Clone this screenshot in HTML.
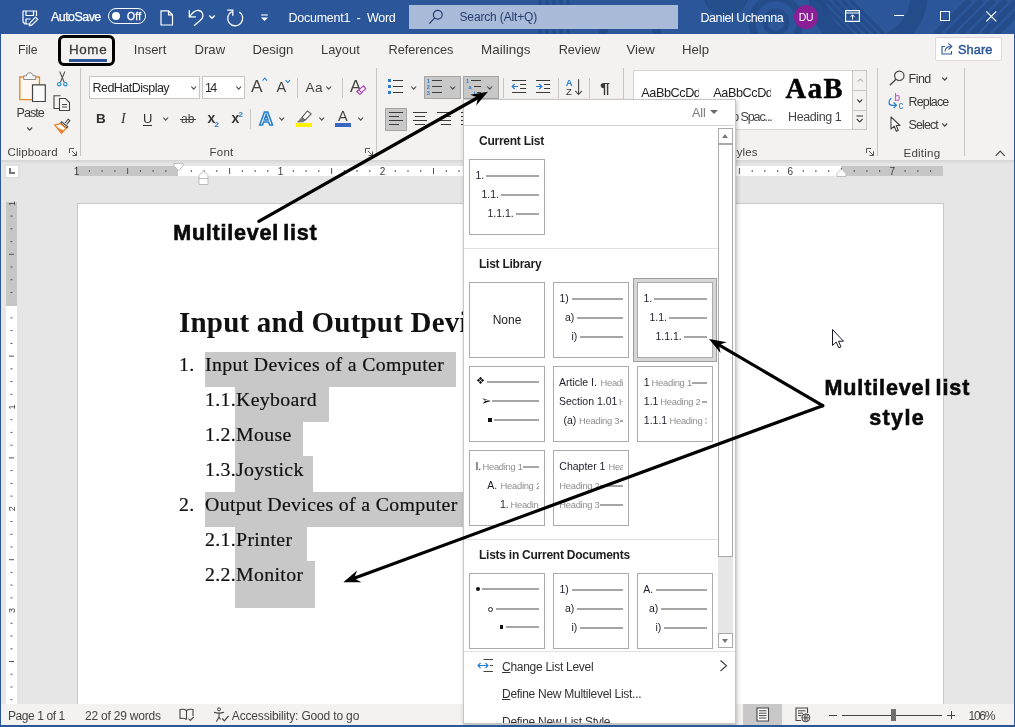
<!DOCTYPE html>
<html lang="en">
<head>
<meta charset="utf-8">
<title>Document1 - Word</title>
<style>
*{box-sizing:border-box;margin:0;padding:0}
html,body{width:1015px;height:727px;overflow:hidden;background:#e6e6e6}
body{font-family:"Liberation Sans",sans-serif;font-size:12px;color:#262626;position:relative}
#root{position:absolute;left:0;top:0;width:1015px;height:727px;overflow:hidden;will-change:transform;opacity:0.999}
.a{position:absolute;white-space:nowrap}
svg{position:absolute;overflow:visible}
#title{left:0;top:0;width:1015px;height:34px;background:#2b579a;color:#fff;font-size:13px}
#title .t{top:10px;line-height:15px}
#tabs{left:0;top:34px;width:1015px;height:32px;background:#f3f2f1;font-size:14px;color:#323130}
#tabs .t{top:7px;line-height:17px}
#ribbon{left:0;top:66px;width:1015px;height:94px;background:#f3f2f1}
#ribbon .lbl{top:79px;font-size:12.5px;line-height:14px;color:#444}
.vsep{width:1px;background:#c8c6c4}
#docbg{left:0;top:160px;width:1015px;height:544px;background:#e6e6e6}
#page{left:77px;top:203px;width:867px;height:502px;background:#fff;border:1px solid #c8c8c8}
.doc{font-family:"Liberation Serif",serif;color:#111}
.hl{background:#c8c8c8}
.li{font-size:19.8px;line-height:24px;letter-spacing:0.35px;-webkit-text-stroke:0.2px #111}
#status{left:0;top:704px;width:1015px;height:23px;background:#f3f2f1;font-size:12.5px;color:#444}
#status .t{top:4px;line-height:15px}
#pop{left:463px;top:99px;width:273px;height:625px;background:#fff;border:1px solid #c6c6c6;box-shadow:1px 2px 4px rgba(0,0,0,.25)}
.sec{font-weight:bold;font-size:12px;letter-spacing:-0.25px;color:#1e1e1e;line-height:15px}
.tile{background:#fff;border:1px solid #ababab;width:76px;height:76px}
.n{font-size:10.5px;color:#1c1c2a;line-height:12px}
.g{font-size:9.4px;color:#8f8f8f;line-height:13px;letter-spacing:-0.28px}
.ln{height:2px;background:#a6a6a6}
.mi{font-size:12px;letter-spacing:-0.28px;color:#333;line-height:16px}
.ann{font-weight:bold;color:#0a0a0a;-webkit-text-stroke:0.6px #0a0a0a}
</style>
</head>
<body>
<div id="root">
<div id="docbg" class="a"></div>
<div class="a" style="left:0;top:160px;width:1015px;height:4px;background:linear-gradient(#d4d4d4,#e6e6e6)"></div>
<div class="a" style="left:4px;top:164px;width:16px;height:15px;background:#fff;border:2px solid #e0e0e0"></div>
<div class="a" style="left:9px;top:168px;width:6px;height:6px;border-left:2px solid #777;border-bottom:2px solid #777"></div>
<div class="a" style="left:76px;top:166px;width:102px;height:10px;background:#c6c6c6"></div>
<div class="a" style="left:178px;top:166px;width:663px;height:10px;background:#fff"></div>
<div class="a" style="left:841px;top:166px;width:102px;height:10px;background:#c6c6c6"></div>
<svg style="left:0;top:160px" width="1015" height="30" font-family="Liberation Sans, sans-serif" font-size="10" fill="#3c3c3c"><text x="76.6" y="14.6" text-anchor="middle">1</text><rect x="88.9" y="10" width="1" height="2" fill="#555"/><rect x="101.6" y="10" width="1" height="2" fill="#555"/><rect x="114.4" y="10" width="1" height="2" fill="#555"/><rect x="127.1" y="8" width="1" height="6" fill="#555"/><rect x="139.9" y="10" width="1" height="2" fill="#555"/><rect x="152.6" y="10" width="1" height="2" fill="#555"/><rect x="165.4" y="10" width="1" height="2" fill="#555"/><rect x="190.8" y="10" width="1" height="2" fill="#555"/><rect x="203.6" y="10" width="1" height="2" fill="#555"/><rect x="216.3" y="10" width="1" height="2" fill="#555"/><rect x="229.1" y="8" width="1" height="6" fill="#555"/><rect x="241.8" y="10" width="1" height="2" fill="#555"/><rect x="254.6" y="10" width="1" height="2" fill="#555"/><rect x="267.3" y="10" width="1" height="2" fill="#555"/><text x="280.6" y="14.6" text-anchor="middle">1</text><rect x="292.8" y="10" width="1" height="2" fill="#555"/><rect x="305.6" y="10" width="1" height="2" fill="#555"/><rect x="318.3" y="10" width="1" height="2" fill="#555"/><rect x="331.1" y="8" width="1" height="6" fill="#555"/><rect x="343.8" y="10" width="1" height="2" fill="#555"/><rect x="356.5" y="10" width="1" height="2" fill="#555"/><rect x="369.3" y="10" width="1" height="2" fill="#555"/><text x="382.5" y="14.6" text-anchor="middle">2</text><rect x="394.8" y="10" width="1" height="2" fill="#555"/><rect x="407.5" y="10" width="1" height="2" fill="#555"/><rect x="420.3" y="10" width="1" height="2" fill="#555"/><rect x="433.0" y="8" width="1" height="6" fill="#555"/><rect x="445.8" y="10" width="1" height="2" fill="#555"/><rect x="458.5" y="10" width="1" height="2" fill="#555"/><rect x="471.3" y="10" width="1" height="2" fill="#555"/><text x="484.5" y="14.6" text-anchor="middle">3</text><rect x="496.8" y="10" width="1" height="2" fill="#555"/><rect x="509.5" y="10" width="1" height="2" fill="#555"/><rect x="522.2" y="10" width="1" height="2" fill="#555"/><rect x="535.0" y="8" width="1" height="6" fill="#555"/><rect x="547.7" y="10" width="1" height="2" fill="#555"/><rect x="560.5" y="10" width="1" height="2" fill="#555"/><rect x="573.2" y="10" width="1" height="2" fill="#555"/><text x="586.5" y="14.6" text-anchor="middle">4</text><rect x="598.7" y="10" width="1" height="2" fill="#555"/><rect x="611.5" y="10" width="1" height="2" fill="#555"/><rect x="624.2" y="10" width="1" height="2" fill="#555"/><rect x="637.0" y="8" width="1" height="6" fill="#555"/><rect x="649.7" y="10" width="1" height="2" fill="#555"/><rect x="662.5" y="10" width="1" height="2" fill="#555"/><rect x="675.2" y="10" width="1" height="2" fill="#555"/><text x="688.5" y="14.6" text-anchor="middle">5</text><rect x="700.7" y="10" width="1" height="2" fill="#555"/><rect x="713.4" y="10" width="1" height="2" fill="#555"/><rect x="726.2" y="10" width="1" height="2" fill="#555"/><rect x="738.9" y="8" width="1" height="6" fill="#555"/><rect x="751.7" y="10" width="1" height="2" fill="#555"/><rect x="764.4" y="10" width="1" height="2" fill="#555"/><rect x="777.2" y="10" width="1" height="2" fill="#555"/><text x="790.4" y="14.6" text-anchor="middle">6</text><rect x="802.7" y="10" width="1" height="2" fill="#555"/><rect x="815.4" y="10" width="1" height="2" fill="#555"/><rect x="828.2" y="10" width="1" height="2" fill="#555"/><rect x="840.9" y="8" width="1" height="6" fill="#555"/><rect x="853.7" y="10" width="1" height="2" fill="#555"/><rect x="866.4" y="10" width="1" height="2" fill="#555"/><rect x="879.1" y="10" width="1" height="2" fill="#555"/><text x="892.4" y="14.6" text-anchor="middle">7</text><rect x="904.6" y="10" width="1" height="2" fill="#555"/><rect x="917.4" y="10" width="1" height="2" fill="#555"/><rect x="930.1" y="10" width="1" height="2" fill="#555"/><path d="M174 3.5H183V6L178.5 10.5L174 6Z" fill="#fff" stroke="#bdbdbd" stroke-width="1"/><path d="M199 24.5V15.5L203.5 11L208 15.5V24.5Z M199 18.5H208" fill="#fff" stroke="#bdbdbd" stroke-width="1"/><path d="M837 16.5V13.5L841.5 9L846 13.5V16.5Z" fill="#fff" stroke="#bdbdbd" stroke-width="1"/></svg>
<div class="a" style="left:6px;top:202px;width:11px;height:104px;background:#c6c6c6"></div>
<div class="a" style="left:6px;top:306px;width:11px;height:398px;background:#fff"></div>
<svg style="left:0;top:0" width="30" height="704" font-family="Liberation Sans, sans-serif" font-size="9" fill="#3c3c3c"><text transform="translate(15,203.4) rotate(-90)" text-anchor="middle">1</text><rect x="10.5" y="215.6" width="2" height="1" fill="#555"/><rect x="10.5" y="228.3" width="2" height="1" fill="#555"/><rect x="10.5" y="241.1" width="2" height="1" fill="#555"/><rect x="9" y="253.8" width="5" height="1" fill="#555"/><rect x="10.5" y="266.5" width="2" height="1" fill="#555"/><rect x="10.5" y="279.2" width="2" height="1" fill="#555"/><rect x="10.5" y="292.0" width="2" height="1" fill="#555"/><rect x="10.5" y="317.4" width="2" height="1" fill="#555"/><rect x="10.5" y="330.1" width="2" height="1" fill="#555"/><rect x="10.5" y="342.9" width="2" height="1" fill="#555"/><rect x="9" y="355.6" width="5" height="1" fill="#555"/><rect x="10.5" y="368.3" width="2" height="1" fill="#555"/><rect x="10.5" y="381.0" width="2" height="1" fill="#555"/><rect x="10.5" y="393.8" width="2" height="1" fill="#555"/><text transform="translate(15,407.0) rotate(-90)" text-anchor="middle">1</text><rect x="10.5" y="419.2" width="2" height="1" fill="#555"/><rect x="10.5" y="431.9" width="2" height="1" fill="#555"/><rect x="10.5" y="444.7" width="2" height="1" fill="#555"/><rect x="9" y="457.4" width="5" height="1" fill="#555"/><rect x="10.5" y="470.1" width="2" height="1" fill="#555"/><rect x="10.5" y="482.9" width="2" height="1" fill="#555"/><rect x="10.5" y="495.6" width="2" height="1" fill="#555"/><text transform="translate(15,508.8) rotate(-90)" text-anchor="middle">2</text><rect x="10.5" y="521.0" width="2" height="1" fill="#555"/><rect x="10.5" y="533.8" width="2" height="1" fill="#555"/><rect x="10.5" y="546.5" width="2" height="1" fill="#555"/><rect x="9" y="559.2" width="5" height="1" fill="#555"/><rect x="10.5" y="571.9" width="2" height="1" fill="#555"/><rect x="10.5" y="584.6" width="2" height="1" fill="#555"/><rect x="10.5" y="597.4" width="2" height="1" fill="#555"/><text transform="translate(15,610.6) rotate(-90)" text-anchor="middle">3</text><rect x="10.5" y="622.8" width="2" height="1" fill="#555"/><rect x="10.5" y="635.5" width="2" height="1" fill="#555"/><rect x="10.5" y="648.3" width="2" height="1" fill="#555"/><rect x="9" y="661.0" width="5" height="1" fill="#555"/><rect x="10.5" y="673.7" width="2" height="1" fill="#555"/><rect x="10.5" y="686.5" width="2" height="1" fill="#555"/><rect x="10.5" y="699.2" width="2" height="1" fill="#555"/></svg>
<div id="page" class="a"></div>

<!-- DOCUMENT -->
<div class="a hl" style="left:205px;top:352px;width:251px;height:35px"></div>
<div class="a hl" style="left:235px;top:386px;width:94px;height:36px"></div>
<div class="a hl" style="left:235px;top:421px;width:68px;height:36px"></div>
<div class="a hl" style="left:235px;top:456px;width:78px;height:36px"></div>
<div class="a hl" style="left:205px;top:492px;width:265px;height:35px"></div>
<div class="a hl" style="left:235px;top:526px;width:72px;height:36px"></div>
<div class="a hl" style="left:235px;top:561px;width:80px;height:47px"></div>
<div class="a doc" id="h1" style="left:179px;top:305px;font-size:29px;letter-spacing:0.2px;font-weight:bold;line-height:34px">Input and Output Devices</div>
<div class="a doc li" style="left:179px;top:352.3px">1.</div>
<div class="a doc li" id="l1" style="left:205px;top:352.3px">Input Devices of a Computer</div>
<div class="a doc li" id="l11" style="left:205px;top:387.3px">1.1.Keyboard</div>
<div class="a doc li" id="l12" style="left:205px;top:422.3px">1.2.Mouse</div>
<div class="a doc li" id="l13" style="left:205px;top:457.3px">1.3.Joystick</div>
<div class="a doc li" style="left:179px;top:492.3px">2.</div>
<div class="a doc li" id="l2" style="left:205px;top:492.3px">Output Devices of a Computer</div>
<div class="a doc li" id="l21" style="left:205px;top:527.3px">2.1.Printer</div>
<div class="a doc li" id="l22" style="left:205px;top:562.3px">2.2.Monitor</div>

<!-- TITLE BAR -->
<div id="title" class="a"></div>
<svg style="left:500px;top:0" width="515" height="34" viewBox="0 0 515 34"><defs><clipPath id="tb"><rect x="0" y="0" width="515" height="34"/></clipPath></defs><g clip-path="url(#tb)" fill="none" stroke="#234a87" stroke-opacity="0.8"><circle cx="276" cy="22" r="11" stroke-width="5"/><circle cx="276" cy="22" r="24" stroke-width="7"/><circle cx="226" cy="-6" r="22" stroke-width="1" fill="#234a87" fill-opacity="0.7"/><path d="M40 0V34M47 0V34M54 0V34M61 0V34M68 0V34" stroke-width="3"/><circle cx="130" cy="40" r="28" stroke-width="8"/><path d="M318 0L352 34M326 0L360 34M334 0L368 34M342 0L376 34M350 0L384 34" stroke-width="3.5"/><circle cx="368" cy="-5" r="51" stroke-width="17"/><path d="M436 34L470 0M448 34L482 0M460 34L494 0M472 34L506 0M484 34L518 0M496 34L530 0" stroke-width="6"/></g></svg>
<div class="a" style="left:409px;top:5px;width:269px;height:24px;background:#a9bbd9"></div>
<svg style="left:22px;top:9.5px" width="17" height="17"><g fill="none" stroke="#fff" stroke-width="1.2" stroke-linejoin="round"><path d="M7 14H3L1 12V1H14.5V6"/><path d="M4 1V5.5H11.5V1"/><path d="M4 14V9H8.5"/><path d="M7.3 15.8L8 12.8L13.6 7.2L15.7 9.3L10.1 14.9Z"/></g></svg>
<div class="a" id="autosave" style="left:51px;top:9.0px;font-size:12.5px;line-height:16px;color:#fff;letter-spacing:-0.558px;-webkit-text-stroke:0.25px #fff">AutoSave</div>
<div class="a" style="left:108px;top:8px;width:38px;height:16px;border:1.2px solid #fff;border-radius:8px"></div>
<div class="a" style="left:112px;top:12px;width:8.2px;height:8.2px;border-radius:4.1px;background:#fff"></div>
<div class="a" id="off" style="left:127px;top:10.0px;font-size:10.3px;line-height:13px;color:#fff;letter-spacing:0.226px;-webkit-text-stroke:0.3px #fff">Off</div>
<svg style="left:160px;top:10px" width="14" height="16"><path d="M1 0.8H8.5L12.5 4.8V15H1Z M8.5 0.8V4.8H12.5" fill="none" stroke="#fff" stroke-width="1.2"/></svg>
<svg style="left:187px;top:9px" width="19" height="18"><path d="M2.3 1.2V7.8H8.9M2.8 7.3C5.5 3.5 9 1 12 1.5C15.5 2.1 16.8 6 15.2 9.2C14.5 10.6 10 14 7.1 16.7" fill="none" stroke="#fff" stroke-width="1.3"/></svg>
<svg style="left:209.3px;top:15px" width="7" height="5"><path d="M0.3 0.5L3.00 3.30L5.70 0.5" fill="none" stroke="#fff" stroke-width="1.3"/></svg>
<svg style="left:226px;top:9px" width="18" height="18"><path d="M1.2 1.2H6.8V6.7M5.8 2.6A7.5 7.5 0 1 0 13.3 3" fill="none" stroke="#fff" stroke-width="1.3"/></svg>
<svg style="left:259.5px;top:13.5px" width="9" height="8"><path d="M1.2 1H7.8" stroke="#fff" stroke-width="1.1"/><path d="M1 3.5H8L4.5 7Z" fill="#fff"/></svg>
<div class="a" id="doct" style="left:288.5px;top:10.0px;font-size:12.5px;line-height:16px;color:#fff;letter-spacing:-0.254px">Document1&nbsp;&nbsp;-&nbsp;&nbsp;Word</div>
<svg style="left:428px;top:9px" width="16" height="16"><circle cx="9.8" cy="5.7" r="4.4" fill="none" stroke="#253d6e" stroke-width="1.2"/><path d="M6.7 8.9L1.3 14.6" stroke="#253d6e" stroke-width="1.3"/></svg>
<div class="a" id="search" style="left:459.5px;top:9.0px;font-size:12px;line-height:16px;color:#253d6e;letter-spacing:-0.146px">Search (Alt+Q)</div>
<div class="a" id="user" style="left:700.5px;top:10.0px;font-size:12.5px;line-height:16px;color:#fff;letter-spacing:-0.434px">Daniel Uchenna</div>
<div class="a" style="left:794.3px;top:5.1px;width:23.6px;height:23.6px;border-radius:12px;background:#8a1f96"></div>
<div class="a" id="du" style="left:798.8px;top:10.5px;font-size:10.4px;line-height:14px;color:#fff;letter-spacing:-0.221px">DU</div>
<svg style="left:845px;top:10px" width="15" height="12"><path d="M0.6 0.6H14.4V11.4H0.6Z M0.6 3H14.4" fill="none" stroke="#fff" stroke-width="1.1"/><path d="M7.5 9.5V5M5.5 6.8L7.5 4.8L9.5 6.8" fill="none" stroke="#fff" stroke-width="1"/></svg>
<div class="a" style="left:894px;top:15.3px;width:10px;height:1.2px;background:#fff"></div>
<div class="a" style="left:940px;top:11px;width:10px;height:10px;border:1.2px solid #fff"></div>
<svg style="left:986px;top:11px" width="12" height="12"><path d="M0.3 0.3L10.3 10.3M10.3 0.3L0.3 10.3" stroke="#fff" stroke-width="1.2"/></svg>
<!-- TABS -->
<div id="tabs" class="a"></div>
<div class="a" id="tabFile" style="left:18px;top:42.0px;font-size:12.2px;line-height:16px;color:#3b3a39;letter-spacing:-0.019px">File</div>
<div class="a" id="tabHome" style="left:69px;top:41.0px;font-size:13.4px;line-height:17px;color:#3b3a39;letter-spacing:0.618px;-webkit-text-stroke:0.3px #3b3a39">Home</div>
<div class="a" id="tabInsert" style="left:133.8px;top:41.0px;font-size:13.0px;line-height:17px;color:#3b3a39;letter-spacing:-0.003px">Insert</div>
<div class="a" id="tabDraw" style="left:194.5px;top:41.0px;font-size:13.1px;line-height:17px;color:#3b3a39;letter-spacing:0.01px">Draw</div>
<div class="a" id="tabDesign" style="left:252.5px;top:41.0px;font-size:13.1px;line-height:17px;color:#3b3a39;letter-spacing:0.004px">Design</div>
<div class="a" id="tabLayout" style="left:321px;top:41.0px;font-size:12.9px;line-height:17px;color:#3b3a39;letter-spacing:0.014px">Layout</div>
<div class="a" id="tabReferences" style="left:388.5px;top:41.5px;font-size:12.7px;line-height:17px;color:#3b3a39;letter-spacing:0.006px">References</div>
<div class="a" id="tabMailings" style="left:481px;top:41.0px;font-size:13.4px;line-height:17px;color:#3b3a39;letter-spacing:0.05px">Mailings</div>
<div class="a" id="tabReview" style="left:558.7px;top:41.5px;font-size:12.7px;line-height:17px;color:#3b3a39;letter-spacing:-0.028px">Review</div>
<div class="a" id="tabView" style="left:626.5px;top:41.0px;font-size:13.2px;line-height:17px;color:#3b3a39;letter-spacing:-0.024px">View</div>
<div class="a" id="tabHelp" style="left:682px;top:41.0px;font-size:13.2px;line-height:17px;color:#3b3a39;letter-spacing:-0.016px">Help</div>
<div class="a" style="left:69px;top:59px;width:38px;height:3px;background:#2b579a"></div>
<div class="a" style="left:58px;top:35px;width:57px;height:31px;border:3px solid #000;border-radius:6px"></div>
<div class="a" style="left:935px;top:37px;width:67px;height:24px;background:#fff;border:1px solid #dddbd9;border-radius:2px"></div>
<svg style="left:941px;top:42px" width="13" height="13"><path d="M4 4.5H1V12H10.5V9" fill="none" stroke="#2b579a" stroke-width="1.1"/><path d="M4 9.5C4.5 6 6.5 4.5 9.5 4.5M7.5 1.5L10.8 4.5L7.5 7.5" fill="none" stroke="#2b579a" stroke-width="1.1"/></svg>
<div class="a" id="share" style="left:958px;top:41.0px;font-size:12.8px;line-height:17px;color:#2b579a;letter-spacing:0.061px;-webkit-text-stroke:0.45px #2b579a">Share</div>
<!-- RIBBON -->
<div id="ribbon" class="a"></div>
<svg style="left:18px;top:71px" width="30" height="32"><path d="M1.8 6H21.4V28.6H1.8Z" fill="#fdf8f1" stroke="#e68a2e" stroke-width="1.4"/><path d="M5.7 8.5V4.8H8.5C8.5 0.8 15 0.8 15 4.8H17.8V8.5Z" fill="#f6f6f6" stroke="#8a8a8a" stroke-width="1"/><path d="M14.5 13.8H27.3V30.5H14.5Z" fill="#fafafa" stroke="#444" stroke-width="1.2"/></svg>
<div class="a" id="paste" style="left:16.5px;top:105.0px;font-size:12.5px;line-height:16px;color:#3b3a39;letter-spacing:-0.916px">Paste</div>
<svg style="left:27px;top:127px" width="6.5" height="4.8"><path d="M0.3 0.5L2.75 3.10L5.20 0.5" fill="none" stroke="#444" stroke-width="1.1"/></svg>
<svg style="left:56px;top:71px" width="13" height="17"><path d="M3.7 0.5L8.2 11.3M8.9 0.5L4.4 11.3" fill="none" stroke="#555" stroke-width="1.1"/><circle cx="3.2" cy="13.2" r="1.7" fill="none" stroke="#2a8dd4" stroke-width="1.2"/><circle cx="9.4" cy="13.2" r="1.7" fill="none" stroke="#2a8dd4" stroke-width="1.2"/></svg>
<svg style="left:53px;top:95px" width="18" height="17"><path d="M6.5 13.5H1V0.8H7.5" fill="none" stroke="#444" stroke-width="1.1"/><path d="M6.5 3.5H12.5L16.5 7.5V15.5H6.5Z" fill="#f8f8f8" stroke="#444" stroke-width="1.1"/><path d="M9 9.5H14M9 12H14" stroke="#444" stroke-width="1"/></svg>
<svg style="left:54px;top:118px" width="17" height="17"><path d="M11 5L14.2 1.2L15.8 2.6L12.8 6.4" fill="none" stroke="#444" stroke-width="1.1"/><path d="M7.8 3.8L13.8 8.8L12.6 10.2L6.6 5.2Z" fill="#f3f3f3" stroke="#444" stroke-width="1.1"/><path d="M6.4 5.6L0.8 7.2L7.5 15.2L12.2 10.4Z" fill="#fff" stroke="#e8812a" stroke-width="1.3"/><path d="M3 9.5L7.5 15L10 12.5Z" fill="#e8812a"/></svg>
<div class="a" id="lblclip" style="left:7.5px;top:144.5px;font-size:11.5px;line-height:15px;color:#444;letter-spacing:0.122px">Clipboard</div>
<svg style="left:69px;top:148px" width="9" height="9"><path d="M0.5 5V0.5H5M3 3L7.5 7.5M7.5 3.5V7.5H3.5" fill="none" stroke="#555" stroke-width="1"/></svg>
<div class="a" style="left:80px;top:68px;width:1px;height:88px;background:#c8c6c4"></div>
<div class="a" style="left:89px;top:76px;width:111px;height:23px;background:#fff;border:1px solid #c8c6c4"></div>
<div class="a" id="fontname" style="left:92.5px;top:80.0px;font-size:12.5px;line-height:16px;color:#262626;letter-spacing:-0.522px">RedHatDisplay</div>
<svg style="left:190.5px;top:86px" width="6.4" height="4.9"><path d="M0.3 0.5L2.70 3.20L5.10 0.5" fill="none" stroke="#444" stroke-width="1.1"/></svg>
<div class="a" style="left:202px;top:76px;width:43px;height:23px;background:#fff;border:1px solid #c8c6c4"></div>
<div class="a" id="fontsize" style="left:205px;top:80.0px;font-size:12.5px;line-height:16px;color:#262626;letter-spacing:-1.604px">14</div>
<svg style="left:235.5px;top:86px" width="6.4" height="4.9"><path d="M0.3 0.5L2.70 3.20L5.10 0.5" fill="none" stroke="#444" stroke-width="1.1"/></svg>
<div class="a" id="growA" style="left:251px;top:75.0px;font-size:17.3px;line-height:22px;color:#444;letter-spacing:0px">A</div>
<svg style="left:262px;top:77px" width="6" height="5"><path d="M0.5 3.7L2.8 1L5.1 3.7" fill="none" stroke="#2a7fd0" stroke-width="1.1"/></svg>
<div class="a" id="shrinkA" style="left:276.5px;top:77.5px;font-size:14.5px;line-height:19px;color:#444">A</div>
<svg style="left:285px;top:79px" width="6" height="5"><path d="M0.5 1L2.8 3.7L5.1 1" fill="none" stroke="#2a7fd0" stroke-width="1.1"/></svg>
<div class="a" style="left:297px;top:78px;width:1px;height:20px;background:#c8c6c4"></div>
<div class="a" id="aa" style="left:305.5px;top:78.5px;font-size:13.5px;line-height:18px;color:#444;letter-spacing:0.6px">Aa</div>
<svg style="left:326px;top:86px" width="6.4" height="4.9"><path d="M0.3 0.5L2.70 3.20L5.10 0.5" fill="none" stroke="#444" stroke-width="1.1"/></svg>
<div class="a" style="left:342px;top:78px;width:1px;height:20px;background:#c8c6c4"></div>
<div class="a" id="clearA" style="left:350px;top:75.5px;font-size:17px;line-height:22px;color:#444">A</div>
<svg style="left:356px;top:85px" width="11" height="11"><path d="M0.8 6.5L7.6 0.9L9.7 3.8L3.9 9.5Z" fill="#fff" stroke="#b043b5" stroke-width="1.2"/><path d="M2.8 4.8L5.9 7.7" stroke="#b043b5" stroke-width="1.1"/></svg>
<div class="a" id="bB" style="left:96px;top:109.5px;font-size:13.5px;line-height:18px;color:#333;font-weight:bold">B</div>
<div class="a" id="bI" style="left:121px;top:109.5px;font-size:14px;line-height:18px;color:#333;font-style:italic;font-family:'Liberation Serif',serif">I</div>
<div class="a" id="bU" style="left:143px;top:110.0px;font-size:13px;line-height:17px;color:#333">U</div>
<div class="a" style="left:143px;top:125px;width:9px;height:1px;background:#333"></div>
<svg style="left:162.5px;top:117px" width="6.4" height="4.9"><path d="M0.3 0.5L2.70 3.20L5.10 0.5" fill="none" stroke="#444" stroke-width="1.1"/></svg>
<div class="a" id="bab" style="left:181px;top:111.0px;font-size:12px;line-height:16px;color:#444">ab</div>
<div class="a" style="left:179.5px;top:119px;width:16px;height:1px;background:#444"></div>
<div class="a" id="bsub" style="left:207.5px;top:109.0px;font-size:14px;line-height:18px;color:#333;font-weight:bold">x</div>
<div class="a" id="bsub2" style="left:214.5px;top:119.5px;font-size:8px;line-height:10px;color:#2a7fd0;font-weight:bold">2</div>
<div class="a" id="bsup" style="left:231.5px;top:109.0px;font-size:14px;line-height:18px;color:#333;font-weight:bold">x</div>
<div class="a" id="bsup2" style="left:238.5px;top:109.5px;font-size:8px;line-height:10px;color:#2a7fd0;font-weight:bold">2</div>
<div class="a" style="left:250px;top:109px;width:1px;height:20px;background:#c8c6c4"></div>
<svg style="left:256px;top:108px" width="20" height="20"><text x="10" y="16.8" text-anchor="middle" font-family="Liberation Sans, sans-serif" font-weight="bold" font-size="19" fill="#fff" stroke="#2a7fd0" stroke-width="1.6">A</text></svg>
<svg style="left:279px;top:117px" width="6.4" height="4.9"><path d="M0.3 0.5L2.70 3.20L5.10 0.5" fill="none" stroke="#444" stroke-width="1.1"/></svg>
<svg style="left:295px;top:109px" width="18" height="19"><path d="M12.4 2L16.2 4.9L10.2 11.2L6.8 8.6Z" fill="#fff" stroke="#555" stroke-width="1.1" stroke-linejoin="round"/><path d="M6.8 8.6L10.2 11.2L8.3 12.8L2.6 13Z" fill="#777" stroke="#666" stroke-width="0.7"/><rect x="0.8" y="14" width="16.2" height="4" fill="#fff100"/></svg>
<svg style="left:318.5px;top:117px" width="6.4" height="4.9"><path d="M0.3 0.5L2.70 3.20L5.10 0.5" fill="none" stroke="#444" stroke-width="1.1"/></svg>
<div class="a" id="fcA" style="left:338px;top:106.5px;font-size:14.5px;line-height:19px;color:#444">A</div>
<div class="a" style="left:335px;top:123px;width:16px;height:4px;background:#3c66c4"></div>
<svg style="left:357.5px;top:117px" width="6.4" height="4.9"><path d="M0.3 0.5L2.70 3.20L5.10 0.5" fill="none" stroke="#444" stroke-width="1.1"/></svg>
<div class="a" id="lblfont" style="left:209.5px;top:144.5px;font-size:11.5px;line-height:15px;color:#444;letter-spacing:0.263px">Font</div>
<svg style="left:365px;top:148px" width="9" height="9"><path d="M0.5 5V0.5H5M3 3L7.5 7.5M7.5 3.5V7.5H3.5" fill="none" stroke="#555" stroke-width="1"/></svg>
<div class="a" style="left:376px;top:68px;width:1px;height:88px;background:#c8c6c4"></div>
<svg style="left:387px;top:78px" width="18" height="17"><g fill="#2a7fd0"><rect x="1" y="1" width="3" height="3"/><rect x="1" y="7" width="3" height="3"/><rect x="1" y="13" width="3" height="3"/></g><path d="M6 2.5H16M6 8.5H16M6 14.5H16" stroke="#3b3b3b" stroke-width="1"/></svg>
<svg style="left:411px;top:86px" width="6.4" height="4.9"><path d="M0.3 0.5L2.70 3.20L5.10 0.5" fill="none" stroke="#444" stroke-width="1.1"/></svg>
<div class="a" style="left:424px;top:76px;width:37px;height:23px;background:#c8c8c8;border:1px solid #a6a6a6"></div>
<svg style="left:426px;top:78px" width="18" height="20" font-family="Liberation Sans, sans-serif" font-size="5.6" font-weight="bold" fill="#2a7fd0"><text x="0.8" y="4.7">1</text><text x="0.8" y="10.7">2</text><text x="0.8" y="16.7">3</text><path d="M6 2.5H16M6 8.5H16M6 14.5H16" stroke="#3b3b3b" stroke-width="1"/></svg>
<svg style="left:449.5px;top:86px" width="6.4" height="4.9"><path d="M0.3 0.5L2.70 3.20L5.10 0.5" fill="none" stroke="#444" stroke-width="1.1"/></svg>
<div class="a" style="left:463px;top:76px;width:36px;height:23px;background:#c8c8c8;border:1px solid #a6a6a6"></div>
<svg style="left:464px;top:78px" width="20" height="20" font-family="Liberation Sans, sans-serif" font-size="5.6" font-weight="bold" fill="#2a7fd0"><text x="2" y="4.7">1</text><text x="4.4" y="10.7">a</text><text x="9.8" y="16.7">i</text><path d="M7 2.5H17M10 8.5H17M13 14.5H17" stroke="#3b3b3b" stroke-width="1"/></svg>
<svg style="left:486.5px;top:86px" width="6.4" height="4.9"><path d="M0.3 0.5L2.70 3.20L5.10 0.5" fill="none" stroke="#444" stroke-width="1.1"/></svg>
<div class="a" style="left:503px;top:78px;width:1px;height:20px;background:#c8c6c4"></div>
<svg style="left:511px;top:79px" width="17" height="15"><path d="M1 1.5H15M9 5.5H15M9 9.5H15M1 13.5H15" stroke="#3b3b3b" stroke-width="1"/><path d="M1.2 7.5H7M3.7 5L1.2 7.5L3.7 10" fill="none" stroke="#2a7fd0" stroke-width="1.2"/></svg>
<svg style="left:535px;top:79px" width="17" height="15"><path d="M1 1.5H15M9 5.5H15M9 9.5H15M1 13.5H15" stroke="#3b3b3b" stroke-width="1"/><path d="M1 7.5H6.8M4.3 5L6.8 7.5L4.3 10" fill="none" stroke="#2a7fd0" stroke-width="1.2"/></svg>
<div class="a" style="left:558px;top:78px;width:1px;height:20px;background:#c8c6c4"></div>
<svg style="left:565px;top:77px" width="19" height="20" font-family="Liberation Sans, sans-serif" font-size="9.5"><text x="0.8" y="8.8" fill="#2a7fd0" font-weight="bold">A</text><text x="1" y="17.8" fill="#333" font-size="9.5">Z</text><path d="M13.6 2.2V17.3M10.3 13.8L13.6 17.5L16.9 13.8" fill="none" stroke="#444" stroke-width="1.1"/></svg>
<div class="a" style="left:589px;top:78px;width:1px;height:20px;background:#c8c6c4"></div>
<div class="a" id="pil" style="left:600px;top:77.5px;font-size:15px;line-height:20px;color:#3a3a3a;font-weight:bold;transform:scaleX(1.2);transform-origin:0 0">¶</div>
<div class="a" style="left:385px;top:108px;width:22px;height:23px;background:#c8c8c8;border:1px solid #a6a6a6"></div>
<svg style="left:389px;top:111px" width="16" height="15"><path d="M0 1.5H14M0 5.5H10M0 9.5H14M0 13.5H10" stroke="#3b3b3b" stroke-width="1"/></svg>
<svg style="left:413px;top:111px" width="16" height="15"><path d="M0 1.5H14M2 5.5H12M0 9.5H14M2 13.5H12" stroke="#3b3b3b" stroke-width="1"/></svg>
<svg style="left:437px;top:111px" width="16" height="15"><path d="M0 1.5H14M4 5.5H14M0 9.5H14M4 13.5H14" stroke="#3b3b3b" stroke-width="1"/></svg>
<svg style="left:461px;top:111px" width="16" height="15"><path d="M0 1.5H14M0 5.5H14M0 9.5H14M0 13.5H14" stroke="#3b3b3b" stroke-width="1"/></svg>
<div class="a" style="left:623px;top:68px;width:1px;height:88px;background:#c8c6c4"></div>
<div class="a" style="left:633px;top:70px;width:234px;height:60px;background:#fff;border:1px solid #d6d4d2"></div>
<div class="a" id="sty1" style="left:641.3px;top:84.5px;font-size:12.7px;line-height:17px;color:#1e1e1e;letter-spacing:-0.45px;width:57.9px;overflow:hidden">AaBbCcDd</div>
<div class="a" id="sty2" style="left:713.3px;top:84.5px;font-size:12.7px;line-height:17px;color:#1e1e1e;letter-spacing:-0.45px;width:57.9px;overflow:hidden">AaBbCcDd</div>
<div class="a" id="spac" style="left:732.3px;top:109.0px;font-size:12.5px;line-height:16px;color:#444;letter-spacing:-1.104px">o Spac...</div>
<div class="a" id="aab" style="left:785.5px;top:70.0px;font-size:28.5px;line-height:37px;color:#000;letter-spacing:1.6px;font-weight:bold;font-family:'Liberation Serif',serif;-webkit-text-stroke:0.5px #000">AaB</div>
<div class="a" id="head1" style="left:788px;top:109.0px;font-size:12.5px;line-height:16px;color:#444;letter-spacing:-0.399px">Heading 1</div>
<div class="a" style="left:852px;top:70px;width:15px;height:60px;background:#f3f2f1;border:1px solid #c8c6c4"></div>
<div class="a" style="left:852px;top:90px;width:15px;height:1px;background:#c8c6c4"></div>
<div class="a" style="left:852px;top:110px;width:15px;height:1px;background:#c8c6c4"></div>
<svg style="left:856.5px;top:78px" width="7" height="5"><path d="M0.5 3.7L3.2 1L5.9 3.7" fill="none" stroke="#b5b5b5" stroke-width="1.1"/></svg>
<svg style="left:856.5px;top:99px" width="6.5" height="4.8"><path d="M0.3 0.5L2.75 3.10L5.20 0.5" fill="none" stroke="#444" stroke-width="1.1"/></svg>
<svg style="left:856px;top:115px" width="8" height="9"><path d="M0.5 1H7" stroke="#444" stroke-width="1.1"/><path d="M0.8 4L3.75 7L6.7 4" fill="none" stroke="#444" stroke-width="1.1"/></svg>
<div class="a" id="lblstyles" style="left:725.6px;top:144.5px;font-size:11.5px;line-height:15px;color:#444;letter-spacing:0.097px">Styles</div>
<svg style="left:866px;top:148px" width="9" height="9"><path d="M0.5 5V0.5H5M3 3L7.5 7.5M7.5 3.5V7.5H3.5" fill="none" stroke="#555" stroke-width="1"/></svg>
<div class="a" style="left:877px;top:68px;width:1px;height:88px;background:#c8c6c4"></div>
<svg style="left:889px;top:70px" width="17" height="16"><circle cx="10.3" cy="5.8" r="4.7" fill="none" stroke="#444" stroke-width="1.2"/><path d="M7 9.2L0.8 15.2" stroke="#444" stroke-width="1.3"/></svg>
<div class="a" id="find" style="left:908.5px;top:71.0px;font-size:12.5px;line-height:16px;color:#3b3a39;letter-spacing:-0.506px">Find</div>
<svg style="left:941.5px;top:77px" width="6.5" height="4.8"><path d="M0.3 0.5L2.75 3.10L5.20 0.5" fill="none" stroke="#444" stroke-width="1.1"/></svg>
<svg style="left:887px;top:92px" width="18" height="18" font-family="Liberation Sans, sans-serif"><text x="7.4" y="8.6" font-size="10" fill="#b043b5">b</text><text x="11.5" y="16.7" font-size="10" fill="#2a7fd0">c</text><path d="M4.3 6.2C1.2 8.5 1.2 13.3 5 13.3H9.4M6.6 10.5L9.5 13.3L6.6 16.1" fill="none" stroke="#2a7fd0" stroke-width="1.2"/></svg>
<div class="a" id="replace" style="left:908.5px;top:94.0px;font-size:12.5px;line-height:16px;color:#3b3a39;letter-spacing:-0.844px">Replace</div>
<svg style="left:890px;top:116px" width="12" height="17"><path d="M1 1V13L4.2 10.2L6.4 15.3L8.3 14.5L6.2 9.5H10Z" fill="#fff" stroke="#444" stroke-width="1.1" stroke-linejoin="round"/></svg>
<div class="a" id="select" style="left:908.5px;top:117.0px;font-size:12.5px;line-height:16px;color:#3b3a39;letter-spacing:-0.888px">Select</div>
<svg style="left:942.3px;top:123px" width="6.5" height="4.8"><path d="M0.3 0.5L2.75 3.10L5.20 0.5" fill="none" stroke="#444" stroke-width="1.1"/></svg>
<div class="a" id="lblediting" style="left:903.5px;top:144.5px;font-size:11.6px;line-height:15px;color:#444;letter-spacing:0.189px">Editing</div>
<div class="a" style="left:964px;top:68px;width:1px;height:88px;background:#c8c6c4"></div>
<svg style="left:995px;top:150px" width="11" height="7"><path d="M0.7 5.8L5.2 1.2L9.7 5.8" fill="none" stroke="#444" stroke-width="1.2"/></svg>
<!-- STATUS -->
<div id="status" class="a"></div>
<div class="a" id="st1" style="left:8px;top:708.0px;font-size:12px;line-height:16px;color:#444;letter-spacing:-0.418px">Page 1 of 1</div>
<div class="a" id="st2" style="left:85px;top:708.0px;font-size:12px;line-height:16px;color:#444;letter-spacing:-0.209px">22 of 29 words</div>
<svg style="left:179px;top:708px" width="16" height="14"><path d="M7.5 2.5V11.5M7.5 2.5C5.5 1 3 1 1 1.5V10.5C3 10 5.5 10 7.5 11.5M7.5 2.5C9.5 1 12 1 14 1.5V8" fill="none" stroke="#444" stroke-width="1.1"/><path d="M9.5 10.5L11.3 12.5L14.8 8.8" fill="none" stroke="#444" stroke-width="1.1"/></svg>
<svg style="left:213px;top:707px" width="17" height="16"><circle cx="6" cy="2.3" r="1.5" fill="none" stroke="#444" stroke-width="1"/><path d="M1 5.3C4 6.3 8 6.3 11 5.3M6 6V10M6 10L3.3 14.8M6 10L7.5 12.5" fill="none" stroke="#444" stroke-width="1.1"/><path d="M9.2 11.5L11.3 13.8L15.5 9" fill="none" stroke="#444" stroke-width="1.2"/></svg>
<div class="a" id="st3" style="left:231.8px;top:708.0px;font-size:12px;line-height:16px;color:#444;letter-spacing:-0.162px">Accessibility: Good to go</div>
<div class="a" style="left:743px;top:704px;width:39px;height:21px;background:#c8c8c8"></div>
<svg style="left:756px;top:707px" width="14" height="15"><path d="M1 1H12.5V14H1Z" fill="#fff" stroke="#444" stroke-width="1.1"/><path d="M3 3.8H10.5M3 6.2H10.5M3 8.6H10.5M3 11H10.5" stroke="#444" stroke-width="1"/></svg>
<svg style="left:795px;top:707px" width="16" height="16"><path d="M6 13.5H1V1H12.5V6" fill="none" stroke="#444" stroke-width="1.1"/><path d="M3 3.8H10.5M3 6.2H8M3 8.6H6.5" stroke="#444" stroke-width="1"/><circle cx="10.8" cy="10.8" r="4" fill="#f3f2f1" stroke="#444" stroke-width="1"/><path d="M6.8 10.8H14.8M10.8 6.8V14.8M8.7 7.5C10 9.5 10 12 8.7 14.1M12.9 7.5C11.6 9.5 11.6 12 12.9 14.1" fill="none" stroke="#444" stroke-width="0.8"/></svg>
<div class="a" style="left:829px;top:714.5px;width:8px;height:1px;background:#444"></div>
<div class="a" style="left:842px;top:714.5px;width:100px;height:1px;background:#444"></div>
<div class="a" style="left:891px;top:709px;width:5px;height:12px;background:#6e6e6e"></div>
<div class="a" style="left:947px;top:714.5px;width:8px;height:1px;background:#444"></div>
<div class="a" style="left:950.5px;top:711px;width:1px;height:8px;background:#444"></div>
<div class="a" id="st4" style="left:968.5px;top:708.0px;font-size:12px;line-height:16px;color:#444;letter-spacing:-1.297px">106%</div>
<!-- POPUP -->
<div id="pop" class="a"></div>
<div id="popc" class="a" style="left:0;top:0;width:1015px;height:727px;overflow:hidden">
<div class="a" style="left:692px;top:105px;font-size:12.5px;line-height:16px;color:#7a7a7a">All</div>
<div class="a" style="left:710px;top:110px;width:0;height:0;border-left:4px solid transparent;border-right:4px solid transparent;border-top:4.5px solid #6a6a6a"></div>
<div class="a" style="left:464px;top:125px;width:270px;height:1px;background:#d4d4d4"></div>
<div class="a sec" id="s1" style="left:479px;top:133.6px">Current List</div>
<div class="a sec" id="s2" style="left:479px;top:256.6px">List Library</div>
<div class="a sec" id="s3" style="left:479px;top:547.6px">Lists in Current Documents</div>
<div class="a" style="left:464px;top:248px;width:254px;height:1px;background:#e1e1e1"></div>
<div class="a" style="left:464px;top:539px;width:254px;height:1px;background:#e1e1e1"></div>
<div class="a" style="left:464px;top:651px;width:271px;height:1px;background:#e1e1e1"></div>
<div class="a" style="left:718px;top:128px;width:15px;height:520px;background:#e6e6e6"></div>
<div class="a" style="left:718px;top:128px;width:15px;height:16px;background:#fff;border:1px solid #ababab"></div>
<div class="a" style="left:722px;top:134px;width:0;height:0;border-left:3.5px solid transparent;border-right:3.5px solid transparent;border-bottom:4px solid #777"></div>
<div class="a" style="left:718px;top:144px;width:15px;height:413px;background:#fff;border:1px solid #ababab"></div>
<div class="a" style="left:718px;top:633px;width:15px;height:15px;background:#fff;border:1px solid #ababab"></div>
<div class="a" style="left:722px;top:639px;width:0;height:0;border-left:3.5px solid transparent;border-right:3.5px solid transparent;border-top:4px solid #777"></div>
<div class="a tile" style="left:469px;top:159px"></div>
<div class="a n" style="left:475.5px;top:169px">1.</div>
<div class="a ln" style="left:486px;top:175px;width:53px"></div>
<div class="a n" style="left:481.5px;top:188px">1.1.</div>
<div class="a ln" style="left:501px;top:194px;width:38px"></div>
<div class="a n" style="left:487.5px;top:207px">1.1.1.</div>
<div class="a ln" style="left:516px;top:213px;width:23px"></div>
<div class="a tile" style="left:469px;top:282px"></div>
<div class="a" id="none" style="left:469px;top:312px;width:76px;text-align:center;font-size:12px;line-height:16px;color:#222">None</div>
<div class="a tile" style="left:553px;top:282px"></div>
<div class="a n" style="left:559.5px;top:292px">1)</div>
<div class="a ln" style="left:571.5px;top:298px;width:51.5px"></div>
<div class="a n" style="left:565px;top:311px">a)</div>
<div class="a ln" style="left:577px;top:317px;width:46px"></div>
<div class="a n" style="left:571.5px;top:330px">i)</div>
<div class="a ln" style="left:579.5px;top:336px;width:43.5px"></div>
<div class="a" style="left:633px;top:278px;width:84px;height:84px;background:#d6d6d6;border:1px solid #9d9d9d"></div>
<div class="a tile" style="left:637px;top:282px"></div>
<div class="a n" style="left:643.5px;top:292px">1.</div>
<div class="a ln" style="left:654px;top:298px;width:53px"></div>
<div class="a n" style="left:649.5px;top:311px">1.1.</div>
<div class="a ln" style="left:669px;top:317px;width:38px"></div>
<div class="a n" style="left:655.5px;top:330px">1.1.1.</div>
<div class="a ln" style="left:684px;top:336px;width:23px"></div>
<div class="a tile" style="left:469px;top:366px"></div>
<div class="a" style="left:476px;top:374px;font-size:10px;line-height:14px;color:#111;font-family:'DejaVu Sans',sans-serif">❖</div>
<div class="a ln" style="left:487px;top:381px;width:52px"></div>
<div class="a" style="left:481px;top:393.5px;font-size:12.5px;line-height:14px;color:#111;font-family:'DejaVu Sans',sans-serif">➢</div>
<div class="a ln" style="left:492px;top:400px;width:47px"></div>
<div class="a" style="left:488px;top:418px;width:3.5px;height:3.5px;background:#111"></div>
<div class="a ln" style="left:494px;top:419px;width:45px"></div>
<div class="a tile" style="left:553px;top:366px"></div>
<div class="a" style="left:554px;top:367px;width:69px;height:74px;overflow:hidden">
<div class="a n" style="left:5px;top:9px">Article I.</div>
<div class="a g" style="left:46.5px;top:9px">Heading 1</div>
<div class="a n" style="left:5px;top:28px">Section 1.01</div>
<div class="a g" style="left:65px;top:28px">Heading 2</div>
<div class="a n" style="left:9.5px;top:47px">(a)</div>
<div class="a g" style="left:25px;top:47px">Heading 3</div>
<div class="a ln" style="left:65.5px;top:53px;width:80px"></div>
</div>
<div class="a tile" style="left:637px;top:366px"></div>
<div class="a" style="left:638px;top:367px;width:69px;height:74px;overflow:hidden">
<div class="a n" style="left:5.8px;top:9px">1</div>
<div class="a g" style="left:13.6px;top:9px">Heading 1</div>
<div class="a ln" style="left:53.5px;top:15px;width:80px"></div>
<div class="a n" style="left:5.8px;top:28px">1.1</div>
<div class="a g" style="left:22.3px;top:28px">Heading 2</div>
<div class="a ln" style="left:63.5px;top:34px;width:80px"></div>
<div class="a n" style="left:5.8px;top:47px">1.1.1</div>
<div class="a g" style="left:31.5px;top:47px">Heading 3</div>
</div>
<div class="a tile" style="left:469px;top:450px"></div>
<div class="a" style="left:470px;top:451px;width:69px;height:74px;overflow:hidden">
<div class="a n" style="left:5.4px;top:9px">I.</div>
<div class="a g" style="left:12.5px;top:9px">Heading 1</div>
<div class="a ln" style="left:53px;top:15px;width:80px"></div>
<div class="a n" style="left:17.3px;top:28px">A.</div>
<div class="a g" style="left:30.6px;top:28px">Heading 2</div>
<div class="a n" style="left:30px;top:47px">1.</div>
<div class="a g" style="left:40.5px;top:47px">Heading 3</div>
</div>
<div class="a tile" style="left:553px;top:450px"></div>
<div class="a" style="left:554px;top:451px;width:69px;height:74px;overflow:hidden">
<div class="a n" style="left:5.3px;top:9px">Chapter 1</div>
<div class="a g" style="left:54.4px;top:9px">Heading 1</div>
<div class="a g" style="left:5.3px;top:28px">Heading 2</div>
<div class="a ln" style="left:45.5px;top:34px;width:80px"></div>
<div class="a g" style="left:5.3px;top:47px">Heading 3</div>
<div class="a ln" style="left:45.5px;top:53px;width:80px"></div>
</div>
<div class="a tile" style="left:469px;top:573px"></div>
<div class="a" style="left:475.5px;top:587px;width:4px;height:4px;border-radius:2px;background:#111"></div>
<div class="a ln" style="left:482px;top:588px;width:57px"></div>
<div class="a" style="left:487.5px;top:606.5px;width:5.5px;height:5.5px;border-radius:3px;border:1px solid #222"></div>
<div class="a ln" style="left:496px;top:608px;width:43px"></div>
<div class="a" style="left:499.7px;top:625px;width:3.5px;height:3.5px;background:#111"></div>
<div class="a ln" style="left:506px;top:626px;width:33px"></div>
<div class="a tile" style="left:553px;top:573px"></div>
<div class="a n" style="left:559.5px;top:583px">1)</div>
<div class="a ln" style="left:571.5px;top:589px;width:51.5px"></div>
<div class="a n" style="left:565px;top:602px">a)</div>
<div class="a ln" style="left:577px;top:608px;width:46px"></div>
<div class="a n" style="left:571.5px;top:621px">i)</div>
<div class="a ln" style="left:579.5px;top:627px;width:43.5px"></div>
<div class="a tile" style="left:637px;top:573px"></div>
<div class="a n" style="left:643.2px;top:583px">A.</div>
<div class="a ln" style="left:656px;top:589px;width:51px"></div>
<div class="a n" style="left:649px;top:602px">a)</div>
<div class="a ln" style="left:661px;top:608px;width:46px"></div>
<div class="a n" style="left:655.5px;top:621px">i)</div>
<div class="a ln" style="left:663.5px;top:627px;width:43.5px"></div>
<div class="a mi" id="m1" style="left:502px;top:659px"><u>C</u>hange List Level</div>
<div class="a mi" id="m2" style="left:502px;top:686px"><u>D</u>efine New Multilevel List...</div>
<div class="a mi" id="m3" style="left:502px;top:714px;height:9px;overflow:hidden">Define New <u>L</u>ist Style...</div>
<svg style="left:719px;top:659px" width="10" height="14"><path d="M1.5 1.5 L7.5 6.8 L1.5 12" fill="none" stroke="#444" stroke-width="1.2"/></svg>
<svg style="left:476px;top:657px" width="20" height="16"><g fill="none" stroke-width="1.1"><path d="M7.5 2.5H17M14 8.5H17M7.5 14.5H17" stroke="#444"/><path d="M2 8.5H12M4.5 6L2 8.5L4.5 11M9.5 6L12 8.5L9.5 11" stroke="#1e7fd0"/></g></svg>
</div>
<!-- OVERLAY -->
<svg style="left:0;top:0" width="1015" height="727"><line x1="258.8" y1="221.3" x2="478.0" y2="97.5" stroke="#000" stroke-width="3.2" stroke-linecap="round"/><polygon points="488.0,91.8 476.2,105.6 478.0,97.5 470.1,94.8" fill="#000"/><line x1="822.7" y1="405.7" x2="718.9" y2="344.8" stroke="#000" stroke-width="3.2" stroke-linecap="round"/><polygon points="709.0,339.0 726.8,342.3 718.9,344.8 720.5,352.9" fill="#000"/><line x1="822.7" y1="405.7" x2="354.1" y2="578.3" stroke="#000" stroke-width="3.2" stroke-linecap="round"/><polygon points="343.3,582.3 357.1,570.6 354.1,578.3 361.4,582.2" fill="#000"/><path d="M832.5 329.5V345.5L836.2 342L838.8 347.8L841 346.8L838.5 341.2H843.5Z" fill="#fff" stroke="#1a1a2a" stroke-width="1" stroke-linejoin="round"/></svg>
<div class="a ann" id="ann1" style="left:173.2px;top:219.0px;font-size:21.5px;line-height:28px;letter-spacing:0.785px;word-spacing:-2.5px">Multilevel list</div>
<div class="a ann" id="ann2" style="left:824.5px;top:374.0px;font-size:21.5px;line-height:28px;letter-spacing:0.878px;word-spacing:-2.5px">Multilevel list</div>
<div class="a ann" id="ann3" style="left:869.3px;top:404.0px;font-size:21.5px;line-height:28px;letter-spacing:1.349px;word-spacing:0px">style</div>
<div class="a" style="left:0;top:34px;width:1px;height:693px;background:#2b579a"></div>
<div class="a" style="left:1014px;top:34px;width:1px;height:693px;background:#2b579a"></div>
<div class="a" style="left:0;top:725px;width:1015px;height:2px;background:#2b579a"></div>

</div>
</body>
</html>
